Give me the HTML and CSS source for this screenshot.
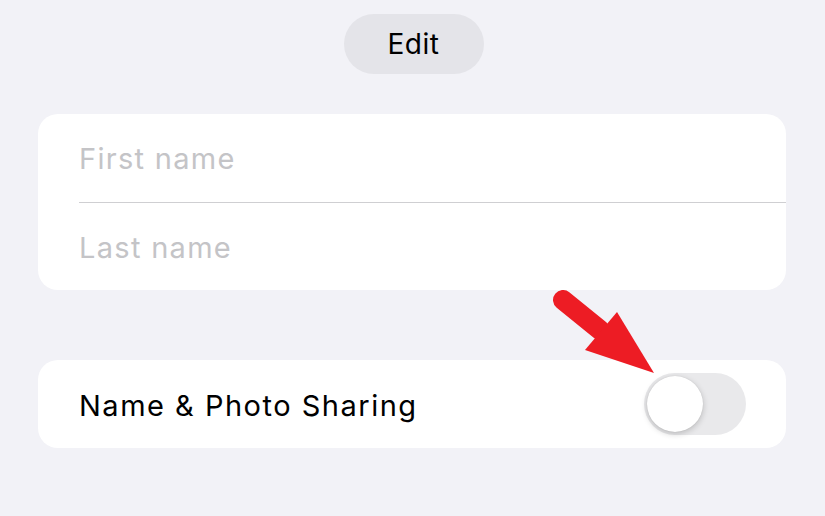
FILE: index.html
```html
<!DOCTYPE html>
<html>
<head>
    <title>Contact Card</title>
    <link rel="stylesheet" href="styles.css">
</head>
<body>
    <div class="page">
        <div class="top">
            <button class="edit">Edit</button>
        </div>
        <div class="group">
            <div class="field">First name</div>
            <div class="field">Last name</div>
        </div>
        <div class="group sharing">
            <div class="row">
                <span class="label">Name &amp; Photo Sharing</span>
                <span class="toggle"><span class="knob"></span></span>
            </div>
        </div>
        <svg class="arrow" width="110" height="90" viewBox="0 0 110 90">
            <line x1="13" y1="10" x2="50" y2="40" stroke="#ed1c24" stroke-width="20" stroke-linecap="round"/>
            <polygon points="35,60 67,22 104,83" fill="#ed1c24"/>
        </svg>
    </div>
</body>
</html>
```

FILE: styles.css
```css
body {
    margin: 0;
    background-color: #f2f2f7;
    font-family: Inter, "Open Sans", sans-serif;
}

.page {
    position: relative;
    width: 825px;
    height: 516px;
    padding: 14px 39px 0 38px;
    box-sizing: border-box;
}

.top {
    display: flex;
    justify-content: center;
    margin-bottom: 40px;
}

.edit {
    width: 140px;
    height: 60px;
    border: none;
    border-radius: 30px;
    background-color: #e4e4e9;
    color: #000;
    font-family: inherit;
    font-size: 28px;
    letter-spacing: 0.5px;
    margin-left: 3px;
}

.group {
    background-color: #fff;
    border-radius: 20px;
    padding-left: 41px;
}

.field {
    height: 88px;
    line-height: 90px;
    font-size: 29px;
    letter-spacing: 1.3px;
    color: #c4c4c7;
}

.field + .field {
    height: 87px;
    border-top: 1px solid #cfcfd2;
}

.sharing {
    margin-top: 70px;
}

.row {
    display: flex;
    align-items: center;
    justify-content: space-between;
    height: 88px;
    padding-right: 40px;
}

.label {
    font-size: 29px;
    letter-spacing: 1.5px;
    color: #000;
    padding-top: 2px;
}

.toggle {
    width: 102px;
    height: 62px;
    border-radius: 31px;
    background-color: #e9e9eb;
    position: relative;
}

.knob {
    position: absolute;
    left: 3px;
    top: 3px;
    width: 56px;
    height: 56px;
    border-radius: 50%;
    background-color: #fff;
    box-shadow: 0 2px 6px rgba(0, 0, 0, 0.2), 0 0 1px rgba(0, 0, 0, 0.15);
}

.arrow {
    position: absolute;
    left: 550px;
    top: 290px;
}
```
